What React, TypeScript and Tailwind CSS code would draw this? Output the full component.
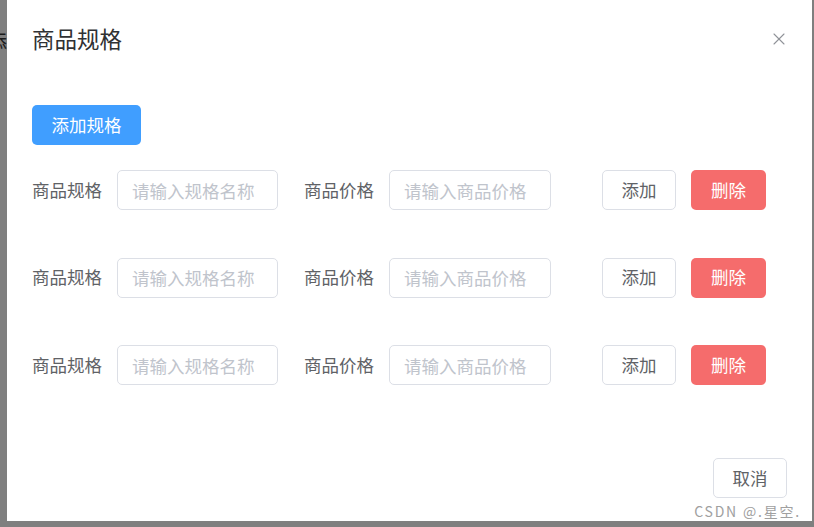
import { X } from "lucide-react"

const font = { fontFamily: '"Microsoft YaHei", "Noto Sans CJK SC", "Noto Sans", sans-serif' }

function SpecRow() {
    return (
        <div className="flex items-center h-[40px] pl-[25px]">
            <span className="w-[85px] text-[17.5px] text-[#606266]">商品规格</span>
            <input
                type="text"
                placeholder="请输入规格名称"
                className="w-[161px] h-[40px] border border-[#dcdfe6] rounded-[5px] pl-[14px] text-[17.5px] outline-none placeholder:text-[#c0c4cc]"
            />
            <span className="ml-[26px] w-[85px] text-[17.5px] text-[#606266]">商品价格</span>
            <input
                type="text"
                placeholder="请输入商品价格"
                className="w-[162px] h-[40px] border border-[#dcdfe6] rounded-[5px] pl-[14px] text-[17.5px] outline-none placeholder:text-[#c0c4cc]"
            />
            <button className="ml-[51px] w-[74px] h-[40px] border border-[#dcdfe6] rounded-[5px] bg-white text-[17.5px] text-[#606266]">添加</button>
            <button className="ml-[15px] w-[75px] h-[40px] rounded-[5px] bg-[#f56c6c] text-[17.5px] text-white">删除</button>
        </div>
    )
}

export default function App() {
    return (
        <div className="relative w-[814px] h-[527px] bg-[#7f7f7f] flex overflow-hidden" style={font}>
            <div className="w-[7px] overflow-hidden shrink-0">
                <span className="block -ml-[13px] mt-[27px] text-[20px] text-[#1a1a1a]">添</span>
            </div>
            <div className="w-[805px] h-[521px] bg-white flex flex-col shrink-0">
                <div className="h-[78px] flex items-center justify-between pl-[25px] pr-[23px]">
                    <span className="text-[22.5px] text-[#303133]">商品规格</span>
                    <X className="w-[20px] h-[20px] text-[#909399]" strokeWidth={1.3} />
                </div>
                <div className="pl-[25px] mt-[27px]">
                    <button className="w-[109px] h-[40px] rounded-[5px] bg-[#409eff] text-white text-[17.5px]">添加规格</button>
                </div>
                <div className="flex flex-col mt-[25px] gap-[47.5px]">
                    <SpecRow />
                    <SpecRow />
                    <SpecRow />
                </div>
                <div className="flex justify-end pr-[25px] mt-[73px]">
                    <button className="w-[74px] h-[40px] border border-[#dcdfe6] rounded-[5px] bg-white text-[17.5px] text-[#606266]">取消</button>
                </div>
            </div>
            <span className="absolute right-[13px] top-[501px] text-[14px] text-[#a0a0a0] tracking-[1.8px]">CSDN @.星空.</span>
        </div>
    )
}
